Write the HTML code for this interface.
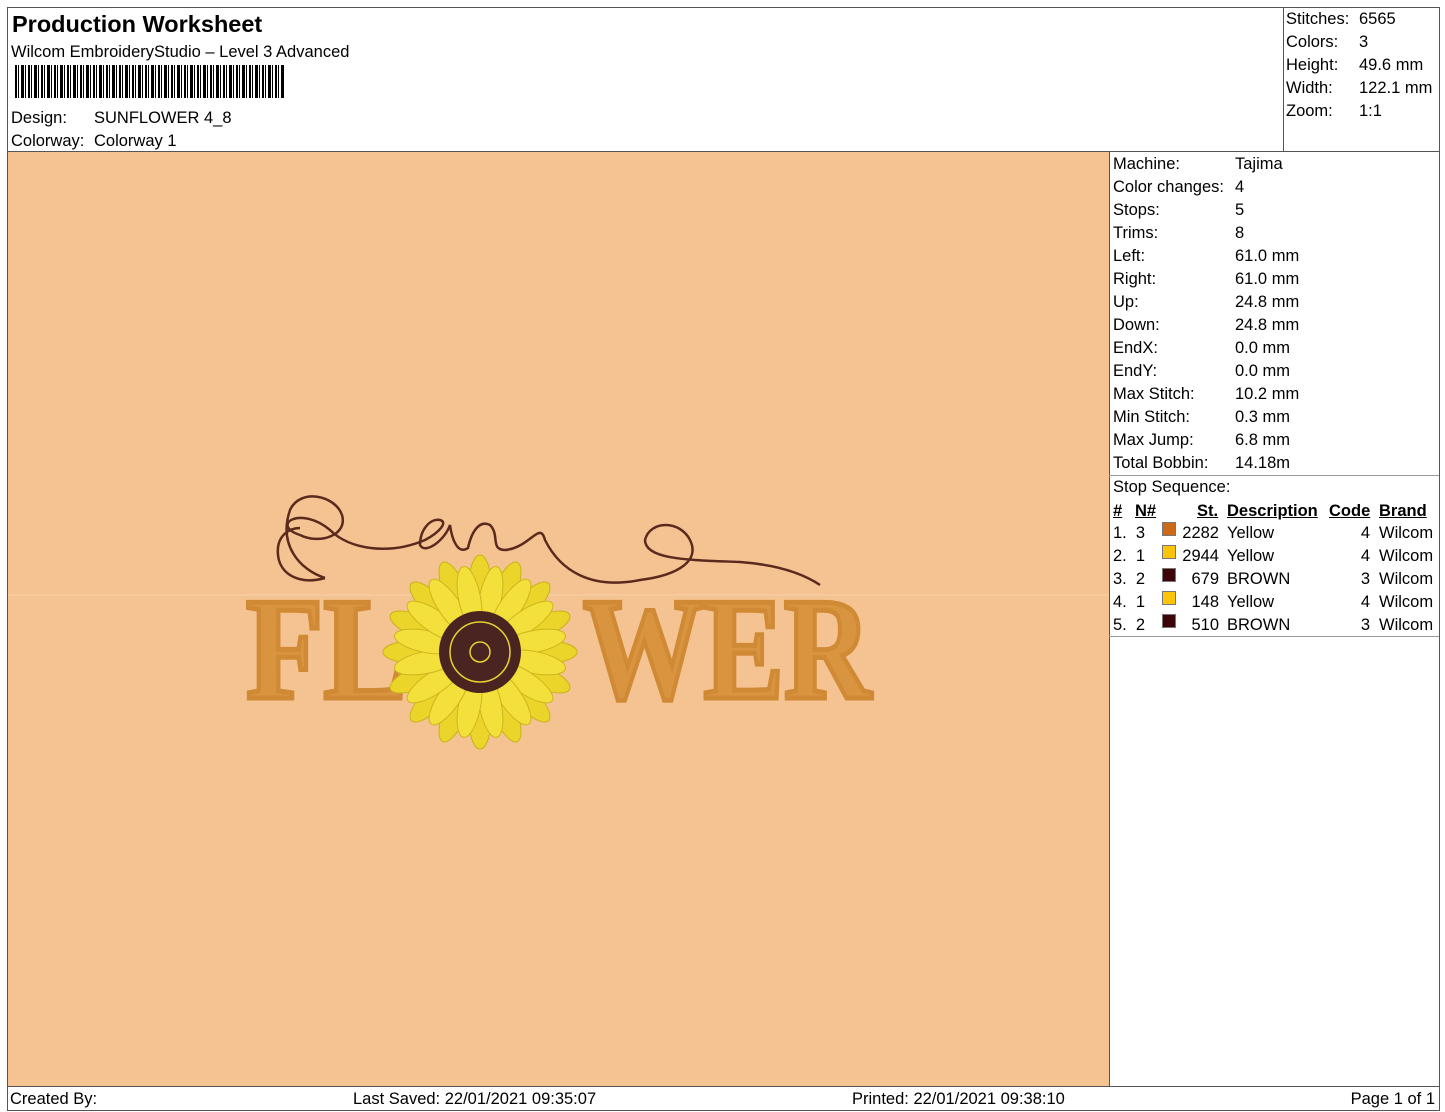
<!DOCTYPE html>
<html><head><meta charset="utf-8"><style>
*{margin:0;padding:0;box-sizing:border-box}
body{width:1445px;height:1112px;background:#fff;font-family:"Liberation Sans",Arial,sans-serif;color:#000;position:relative;overflow:hidden;font-size:16.5px}
.a{position:absolute;white-space:nowrap;line-height:20px;margin-top:2px}
.ln{position:absolute;background:#555}
.sw{position:absolute;width:14px;height:14px;border:1px solid #777}
</style></head><body>
<div class="ln" style="left:7px;top:7px;width:1433px;height:1px"></div>
<div class="ln" style="left:7px;top:7px;width:1px;height:1104px"></div>
<div class="ln" style="left:1439px;top:7px;width:1px;height:1104px"></div>
<div class="ln" style="left:7px;top:151px;width:1433px;height:1px"></div>
<div class="ln" style="left:1283px;top:7px;width:1px;height:145px"></div>
<div class="ln" style="left:7px;top:1086px;width:1433px;height:1px"></div>
<div class="ln" style="left:7px;top:1110px;width:1433px;height:1px"></div>
<div class="ln" style="left:1109px;top:152px;width:1px;height:934px"></div>
<div class="ln" style="left:1109px;top:475px;width:330px;height:1px;background:#999"></div>
<div class="ln" style="left:1109px;top:636px;width:330px;height:1px;background:#999"></div>

<div class="a" style="left:12px;top:9px;font-size:23.5px;font-weight:bold;line-height:26px">Production Worksheet</div>
<div class="a" style="left:11px;top:40px">Wilcom EmbroideryStudio – Level 3 Advanced</div>
<div style="position:absolute;left:15px;top:65px;width:270px;height:33px;background:repeating-linear-gradient(90deg,#000 0 2px,#fff 2px 3px,#000 3px 4px,#fff 4px 6px,#000 6px 9px,#fff 9px 10px,#000 10px 11px,#fff 11px 13px)"></div>
<div class="a" style="left:11px;top:106px">Design:</div><div class="a" style="left:94px;top:106px">SUNFLOWER 4_8</div>
<div class="a" style="left:11px;top:129px">Colorway:</div><div class="a" style="left:94px;top:129px">Colorway 1</div>

<div class="a" style="left:1286px;top:7px">Stitches:</div><div class="a" style="left:1359px;top:7px">6565</div>
<div class="a" style="left:1286px;top:30px">Colors:</div><div class="a" style="left:1359px;top:30px">3</div>
<div class="a" style="left:1286px;top:53px">Height:</div><div class="a" style="left:1359px;top:53px">49.6 mm</div>
<div class="a" style="left:1286px;top:76px">Width:</div><div class="a" style="left:1359px;top:76px">122.1 mm</div>
<div class="a" style="left:1286px;top:99px">Zoom:</div><div class="a" style="left:1359px;top:99px">1:1</div>

<div style="position:absolute;left:8px;top:152px;width:1101px;height:934px;background:#f5c391"></div>
<svg style="position:absolute;left:0;top:0" width="1445" height="1112">
<line x1="8" y1="595" x2="1109" y2="595" stroke="#f8d2a8" stroke-width="1"/>
<path d="M325 578 C300 570 278 545 290 510 C300 488 335 495 342 515 C348 535 320 545 300 535 C270 525 300 505 330 530 C350 550 390 555 425 540 C440 532 448 522 440 520 C430 518 420 530 420 545 C425 555 445 540 450 525 C452 540 458 555 468 548 C472 530 480 520 490 525 C500 535 490 550 505 550 C530 548 540 520 545 540 C560 570 590 590 640 580 C680 575 700 560 690 540 C680 520 650 520 645 540 C645 560 690 560 740 562 C780 565 805 575 820 585" fill="none" stroke="#5a2a1e" stroke-width="2.5"/>
<path d="M325 578 C300 585 280 575 278 555 C276 535 290 528 300 528" fill="none" stroke="#5a2a1e" stroke-width="2.5"/>
<g font-family="Liberation Serif,serif" font-weight="bold" fill="#d8943f" stroke="#d08a36" stroke-width="5" stroke-linejoin="miter">
<text x="246" y="698" font-size="146" textLength="162" lengthAdjust="spacingAndGlyphs">FL</text>
<text x="583" y="698" font-size="146" textLength="288" lengthAdjust="spacingAndGlyphs">WER</text>
</g>
<defs><ellipse id="p" cx="0" cy="-60" rx="12" ry="37" fill="#ecd52a" stroke="#c8b21a" stroke-width="1"/>
<ellipse id="q" cx="0" cy="-55" rx="11" ry="32" fill="#f3e03a" stroke="#cdb520" stroke-width="1"/></defs>
<g transform="translate(480 652)">
<use href="#p" transform="rotate(0)"/><use href="#p" transform="rotate(22.5)"/><use href="#p" transform="rotate(45)"/><use href="#p" transform="rotate(67.5)"/><use href="#p" transform="rotate(90)"/><use href="#p" transform="rotate(112.5)"/><use href="#p" transform="rotate(135)"/><use href="#p" transform="rotate(157.5)"/><use href="#p" transform="rotate(180)"/><use href="#p" transform="rotate(202.5)"/><use href="#p" transform="rotate(225)"/><use href="#p" transform="rotate(247.5)"/><use href="#p" transform="rotate(270)"/><use href="#p" transform="rotate(292.5)"/><use href="#p" transform="rotate(315)"/><use href="#p" transform="rotate(337.5)"/>
<use href="#q" transform="rotate(11)"/><use href="#q" transform="rotate(34)"/><use href="#q" transform="rotate(56)"/><use href="#q" transform="rotate(79)"/><use href="#q" transform="rotate(101)"/><use href="#q" transform="rotate(124)"/><use href="#q" transform="rotate(146)"/><use href="#q" transform="rotate(169)"/><use href="#q" transform="rotate(191)"/><use href="#q" transform="rotate(214)"/><use href="#q" transform="rotate(236)"/><use href="#q" transform="rotate(259)"/><use href="#q" transform="rotate(281)"/><use href="#q" transform="rotate(304)"/><use href="#q" transform="rotate(326)"/><use href="#q" transform="rotate(349)"/>
<circle r="41" fill="#4a2420"/>
<circle r="30" fill="none" stroke="#e6d030" stroke-width="1.5"/>
<circle r="10" fill="none" stroke="#e6d030" stroke-width="1.5"/>
</g>
</svg>

<div class="a" style="left:1113px;top:152px">Machine:</div><div class="a" style="left:1235px;top:152px">Tajima</div>
<div class="a" style="left:1113px;top:175px">Color changes:</div><div class="a" style="left:1235px;top:175px">4</div>
<div class="a" style="left:1113px;top:198px">Stops:</div><div class="a" style="left:1235px;top:198px">5</div>
<div class="a" style="left:1113px;top:221px">Trims:</div><div class="a" style="left:1235px;top:221px">8</div>
<div class="a" style="left:1113px;top:244px">Left:</div><div class="a" style="left:1235px;top:244px">61.0 mm</div>
<div class="a" style="left:1113px;top:267px">Right:</div><div class="a" style="left:1235px;top:267px">61.0 mm</div>
<div class="a" style="left:1113px;top:290px">Up:</div><div class="a" style="left:1235px;top:290px">24.8 mm</div>
<div class="a" style="left:1113px;top:313px">Down:</div><div class="a" style="left:1235px;top:313px">24.8 mm</div>
<div class="a" style="left:1113px;top:336px">EndX:</div><div class="a" style="left:1235px;top:336px">0.0 mm</div>
<div class="a" style="left:1113px;top:359px">EndY:</div><div class="a" style="left:1235px;top:359px">0.0 mm</div>
<div class="a" style="left:1113px;top:382px">Max Stitch:</div><div class="a" style="left:1235px;top:382px">10.2 mm</div>
<div class="a" style="left:1113px;top:405px">Min Stitch:</div><div class="a" style="left:1235px;top:405px">0.3 mm</div>
<div class="a" style="left:1113px;top:428px">Max Jump:</div><div class="a" style="left:1235px;top:428px">6.8 mm</div>
<div class="a" style="left:1113px;top:451px">Total Bobbin:</div><div class="a" style="left:1235px;top:451px">14.18m</div>
<div class="a" style="left:1113px;top:475px">Stop Sequence:</div>
<div class="a" style="left:1113px;top:499px;font-weight:bold;text-decoration:underline">#</div>
<div class="a" style="left:1135px;top:499px;font-weight:bold;text-decoration:underline">N#</div>
<div class="a" style="left:1197px;top:499px;font-weight:bold;text-decoration:underline">St.</div>
<div class="a" style="left:1227px;top:499px;font-weight:bold;text-decoration:underline">Description</div>
<div class="a" style="left:1329px;top:499px;font-weight:bold;text-decoration:underline">Code</div>
<div class="a" style="left:1379px;top:499px;font-weight:bold;text-decoration:underline">Brand</div>

<div class="a" style="left:1113px;top:521px">1.&nbsp; 3</div><div class="sw" style="left:1162px;top:522px;background:#cc6a18"></div><div class="a" style="left:1160px;width:59px;text-align:right;top:521px">2282</div><div class="a" style="left:1227px;top:521px">Yellow</div><div class="a" style="left:1340px;width:30px;text-align:right;top:521px">4</div><div class="a" style="left:1379px;top:521px">Wilcom</div>
<div class="a" style="left:1113px;top:544px">2.&nbsp; 1</div><div class="sw" style="left:1162px;top:545px;background:#fbc40a"></div><div class="a" style="left:1160px;width:59px;text-align:right;top:544px">2944</div><div class="a" style="left:1227px;top:544px">Yellow</div><div class="a" style="left:1340px;width:30px;text-align:right;top:544px">4</div><div class="a" style="left:1379px;top:544px">Wilcom</div>
<div class="a" style="left:1113px;top:567px">3.&nbsp; 2</div><div class="sw" style="left:1162px;top:568px;background:#3d0508"></div><div class="a" style="left:1160px;width:59px;text-align:right;top:567px">679</div><div class="a" style="left:1227px;top:567px">BROWN</div><div class="a" style="left:1340px;width:30px;text-align:right;top:567px">3</div><div class="a" style="left:1379px;top:567px">Wilcom</div>
<div class="a" style="left:1113px;top:590px">4.&nbsp; 1</div><div class="sw" style="left:1162px;top:591px;background:#fbc40a"></div><div class="a" style="left:1160px;width:59px;text-align:right;top:590px">148</div><div class="a" style="left:1227px;top:590px">Yellow</div><div class="a" style="left:1340px;width:30px;text-align:right;top:590px">4</div><div class="a" style="left:1379px;top:590px">Wilcom</div>
<div class="a" style="left:1113px;top:613px">5.&nbsp; 2</div><div class="sw" style="left:1162px;top:614px;background:#3d0508"></div><div class="a" style="left:1160px;width:59px;text-align:right;top:613px">510</div><div class="a" style="left:1227px;top:613px">BROWN</div><div class="a" style="left:1340px;width:30px;text-align:right;top:613px">3</div><div class="a" style="left:1379px;top:613px">Wilcom</div>

<div class="a" style="left:10px;top:1087px">Created By:</div>
<div class="a" style="left:353px;top:1087px">Last Saved: 22/01/2021 09:35:07</div>
<div class="a" style="left:852px;top:1087px">Printed: 22/01/2021 09:38:10</div>
<div class="a" style="left:1340px;width:95px;text-align:right;top:1087px">Page 1 of 1</div>
</body></html>
